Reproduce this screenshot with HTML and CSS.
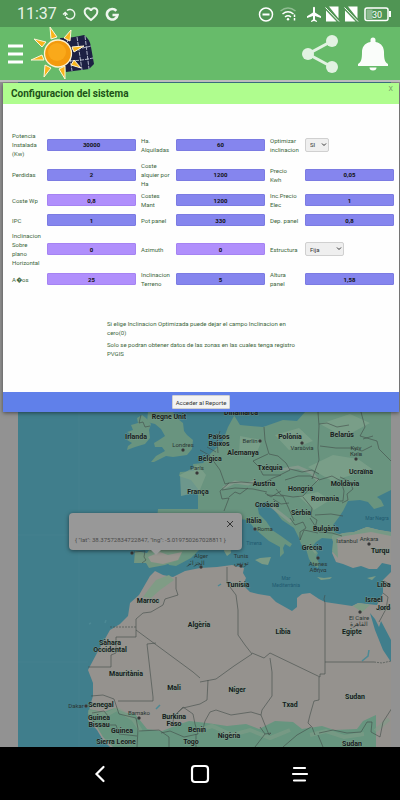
FILE: index.html
```html
<!DOCTYPE html>
<html lang="es">
<head>
    <meta charset="UTF-8">
    <meta name="viewport" content="width=device-width, initial-scale=1.0">
    <title>Configuracion del sistema</title>
    <link rel="stylesheet" href="styles.css">
</head>
<body>
    <div class="status-bar">
        <span class="clock">11:37</span>
        <svg width="58" height="16" viewBox="60 5 58 16" fill="none" stroke="#eef6ee" stroke-width="1.4">
            <path d="M66 9.500a4.800 4.800 0 1 1-1 6.500M62 13.500l2.200-2 2.300 2.300M64.300 12v3"/>
            <path d="M90 19c-4.500-3.500-6.300-5.500-6.300-8a3.200 3.200 0 0 1 6.300-1.200A3.200 3.200 0 0 1 96.300 11c0 2.500-1.800 4.500-6.300 8z" stroke-width="2"/>
            <path d="M115.300 9.800a5.300 5.300 0 1 0 1.200 4.200h-5" stroke-width="2.600"/>
        </svg>
        <svg class="status-right" width="134" height="18" viewBox="258 4 134 18" fill="none" stroke="#fff" stroke-width="1.500">
            <circle cx="266" cy="13.500" r="6.500"/>
            <path d="M262.500 13.500h7" stroke-width="2"/>
            <path d="M280.500 10q7.500-6 15 0" stroke="#8fbd91"/>
            <path d="M282.500 13q5.500-4.500 11 0M285 16q3-2.500 6 0"/>
            <circle cx="288" cy="18.300" r="1.200" fill="#fff" stroke="none"/>
            <path d="M294.500 13.500v6" stroke-dasharray="2.500 1"/>
            <path d="M313 6.500q1-1.500 2 0v5l6 3.800v1.600l-6-1.900v3.500l2 1.400v1l-3-.8-3 .8v-1l2-1.400V15l-6 1.900v-1.600l6-3.800z" fill="#fff" stroke="none"/>
            <path d="M329 5.500h9.500v12zM326 9.500l10.500 11H326zM348 5.500h9.500v12zM345 9.500l10.500 11H345z" fill="#fff" stroke="none"/>
            <path d="M325.500 6.500l13.500 14M344.500 6.500l13.500 14" stroke-width="1"/>
            <rect x="365" y="7" width="23" height="12.500" rx="2"/>
            <path d="M366.500 8.500h6v9.500h-6z" fill="#8dba90" stroke="none"/>
            <path d="M390 10v6" stroke-width="2"/>
            <text x="377" y="16.500" class="battery-text">30</text>
        </svg>
    </div>

    <header class="app-bar">
        <button class="icon-btn" aria-label="Menu">
            <svg width="15" height="20" viewBox="0 0 15 20" stroke="#fff" stroke-width="3"><path d="M0 2h15M0 10h15M0 18h15"/></svg>
        </button>
        <svg class="logo" width="66" height="53" viewBox="30 27 66 53">
            <path d="M60 38q13 0 24-3 6 4 7 12l3 17-5 5-23 3z" fill="#1d2043"/>
            <path d="M67 38l5 33M77 37l5 33M85 36l4 33M62 49q15 1 29-3M65 61q15 0 28-3" stroke="#d6dbe8" stroke-width=".8" stroke-dasharray="4 1" fill="none"/>
            <g fill="#f9b51c" stroke="#fff6d8" stroke-width="1">
                <path d="M50 27l7 10-6 2zM71 30l-1 11-6-3zM34 39l12 3-4 5zM31 60l11-5 2 5zM44 77l1-12 6 3zM65 79l-6-10 6-3zM81 68l-10-3 3-5zM84 46l-10 6-2-5z"/>
            </g>
            <circle cx="58" cy="53.500" r="13.500" fill="#f39a0e" stroke="#fff4d0" stroke-width="1.300"/>
            <circle cx="57" cy="52" r="9" fill="#faa91a"/>
        </svg>
        <button class="icon-btn share" aria-label="Compartir">
            <svg width="38" height="40" viewBox="0 0 38 40" fill="#e2f2e2">
                <path d="M31 7L7 20l24 13" fill="none" stroke="#e2f2e2" stroke-width="3"/>
                <circle cx="31" cy="7" r="6"/><circle cx="7" cy="20" r="6"/><circle cx="31" cy="33" r="6"/>
            </svg>
        </button>
        <button class="icon-btn" aria-label="Notificaciones">
            <svg width="30" height="34" viewBox="0 0 30 34" fill="#fafdfa">
                <path d="M12.500 3a2.500 2.500 0 0 1 5 0v2C24 6 26 11 26 15c0 8 1 10 4 12v2H0v-2c3-2 4-4 4-12C4 11 6 6 12.500 5zM11.500 30.500h7a3.500 3 0 0 1-7 0z"/>
            </svg>
        </button>
    </header>

    <main class="content">
        <svg class="map" viewBox="18 82 373 665" preserveAspectRatio="xMidYMin slice">
            <rect x="18" y="82" width="373" height="665" fill="#407e8c"/>
            <path d="M79 412v335M18 535h51M18 662h70" stroke="#488592" stroke-width=".5"/>
            <!-- Europa -->
            <g fill="#69947f">
                <path d="M127 432l6-2-2-5 7-2-1-5 5-3 4 3 5 6-2 6 1 8-5 6-10 3-8 3 1-4 4-3-5-3 6-4z"/>
                <path d="M148 412h25l5 7 5 4 1 8 3 4 6 5-1 9-5 6-14 2-7-1-6 3-6 3-3 0 5-6 9-5-3-4-7 0-1-4 5-3 6-4-4-7-6-5-8-2z"/>
                <path d="M232 412l8 13 23 2 20-7 14 1 8-9h86v78l-14 7 4 3 3 6-10 3-6-7-8-2-12 1-5 10-4 6-6 8 1 7 8 3-9 4-11-1-6 4-4 5 6 6-2 4 3 6-1 5-5-3-4-6-3-10-5-5-2-6-5-10-12-8-10-13-5-5-10 2 2 10 7 7 6 9 9 6 11 8-2 3-5-3-2 4 1 5-4 4 0-10-11-6-7-6-8-7-6-8-9-1-6 2-12 2-14 10-8 17-8 8-15 8-7-1-3-5-13 0v-13l3-18 2-20 40 0v-20l-7-9-12-4 1-4 14-1-1-7 10-1 8-10 11-10 6-16 6-11z"/>
            </g>
            <g fill="#80a28b" opacity=".7">
                <path d="M180 475l18-10 8 10-7 17-18 4zM240 436l22 4-5 12-18 2zM275 435l24-7 14 13-24 9zM320 424l30-10 20 9-26 14zM308 467l25-12 25 4 14 10-40 12zM298 496l20-4 12 8-16 10z"/>
            </g>
            <path d="M223 488l12-6 13 2 8-3M271 506l10 8 10 8M280 470l18-3 14 6 6 8" fill="none" stroke="#8d9b90" stroke-width="3" opacity=".7"/>
            <path d="M135 551l12 2 2-3h34l-4 10-14 5-16 3-3-5-12 0z" fill="#73957f"/>
            <path d="M148 557l12-5 8 3 14-3-4 8-15 4-12-2z" fill="#98958f"/>
            <path d="M332 536l12-3 10-1 13-5 12 3 12 2v33l-9-2-5 6-8 0-8-3-8 2-10-4-7-2-4-9 2-6z" fill="#96948f"/>
            <path d="M332 536l12-3 10-1 13-5 12 3 12 2v4l-20-4-26 4-8 2 1 20-6-7 1-9z" fill="#779985"/>
            <path d="M255 560l5-2 11-1-3 8-6-1zM226 541l4 2 1 10-4 3-3-5zM317 577l7 1 8-1-2 2-9 1zM367 578l9-2-4 4zM309 546l8 6-2 2z" fill="#7b9b85"/>
            <!-- Africa -->
            <path d="M150 576l5-5 8 4 10 2 12-6 15-3 17-1 15-2 12 3-1 5 3 5-3 7 7 7 8 2 12 2 6 6 16 9 5-4v-9l5-4 8-1 9 6 6 3 27 4 6-3 19 2 6-12 0-13 8-8v178H113l-10-10-6-10-9-10 2-14 3-10v-13l-5-13 9-17 13-23 10-6 8-8 2-13 9-8z" fill="#95928e"/>
            <path d="M148 590l8-10 13-5 5 5-14 10-9 8-8-1zM353 606l6-3 11 2-8 7z" fill="#7f9c85"/>
            <path d="M113 747l-10-10-6-10-9-10 1-8 14 3 12-4 11 5 9 1 12 15 15 2 18-7 9-3 18 2 20 3 19-2 13 5 16-8 18 1 9 7 20-3 12 4 23-1 6-8 13-6v32z" fill="#67957f"/>
            <path d="M88 712l20 2 9-5 16 10 8 12M200 730l12-4 20 9 18-5 20 8 20-8M310 735l16-4 18 6 20-3M375 731l14-12" fill="none" stroke="#819d87" stroke-width="4" opacity=".6"/>
            <path d="M370 613l5 6 4 8 2-6 10 19v22l-8-12-8-20z" fill="#407e8c"/>
            <path d="M362 661l6-5 1-6M156 709l4-4M218 586l3-2M89 624l2-1M105 623l1-3" stroke="#4c8995" stroke-width="1.500" fill="none"/>
            <!-- fronteras -->
            <g fill="none" stroke="#414b48" stroke-width=".6">
                <path d="M141 415l-2 8 4-1 2 5 5-1"/>
                <path d="M264 427l1 13 4 14 9 2 8 7 4 7-10 5-17 0-4-8-6-6 15-7M318 412l1 14-1 22 1 12-7 19M320 446l16 2 16 0 10 3 10-5M349 425l-12 2-10-4-8 1M361 412l4 15-5 9 17 5 2 8 12 12M363 439l10-3"/>
                <path d="M200 450l9 5 11 15 5 14 4-1 12-1 12 1 10 0 10-5 8-3M218 453l-1-13 3-9M207 447l9 5M229 483l-9 8 2 8 7-1-5 13M229 497l6-5 5 2 8-6M222 490l13-2 18 1 14 3M265 493l6 4 10-6M276 489l5 6 12 2 10-1 9-10 7-7-9-3-12 0-13 4M267 495l16 1 6 13 5 12M273 499l8 5 8-1M290 469l12 3 10-2 7 4M303 497l9 11-1 8 6 4-2 8M315 515l16-1 12 2M319 480l13-4 9 5 3 10-1 10-5 0M340 477l9 4 4 8-6 5 1 6-6 3M290 518l5 7 8-3 3 6-6 4 0 8M310 518l9 14 13 1 10 3M300 540l4-10 14 3M134 552l11-1-1 6 2 3-4 3"/>
                <path d="M176 577l0 12 2 6-13 4-2 6-12 7-8 1-7 6v18h-20v16l-5 2v12H88M136 630l57 42 7 6M156 643l-9 1 6 53 0 4h-35"/>
                <path d="M110 627h26" stroke-dasharray="2 1"/>
                <path d="M227 567l0 16 9 12 2 15 0 25 7 10 7 9-18 12-18 13-16 3M252 653l12 5 6-5 50 24v-3h5v-71l-1-4 1-4M325 662h49M270 658l2 14 0 24-10 14-1 5-10-3-20 3-15-5-6 2-5 9-3 12M319 677v23l-5 1-4 14-2 8 4 4 3 8M261 715l8 20 2-2-6 1-5-7M265 734l-10 13M208 680l-1 20-7 4-17 4-9 8-1 6M174 716l9-9 10 7 2 10 3 10-14 3-14-6-9 2M91 696l12-1 11 4 5 15 17 4 2 11-1 18M92 713l12-2 4 5M98 725h18l3 9 18 2M139 731l20-1 10 7v10M196 734l0 13M319 733l14-3 14 3 14-1 6-10 5 0-1 10 9 5 3-15 9-14M318 735l5 12M311 727l-14 8-14 12M383 593l5 4-2 12-7 13M379 610l12-2M384 581l7 4"/>
                <path d="M374 662l8 1 9-2" stroke-dasharray="2 1"/>
            </g>
            <g class="country">
                <text x="169" y="419">Regne Unit</text>
                <text x="241" y="415">Dinamarca</text>
                <text x="136" y="439">Irlanda</text>
                <text x="219" y="439">Països</text>
                <text x="219" y="446">Baixos</text>
                <text x="210" y="461">Bèlgica</text>
                <text x="243" y="455">Alemanya</text>
                <text x="290" y="439">Polònia</text>
                <text x="342" y="437">Belarús</text>
                <text x="270" y="470">Txèquia</text>
                <text x="264" y="486">Àustria</text>
                <text x="288" y="491" class="start">Hongria</text>
                <text x="361" y="474">Ucraïna</text>
                <text x="345" y="486">Moldàvia</text>
                <text x="198" y="494">França</text>
                <text x="325" y="501">Romania</text>
                <text x="267" y="507">Croàcia</text>
                <text x="301" y="515">Sèrbia</text>
                <text x="254" y="523">Itàlia</text>
                <text x="326" y="531">Bulgària</text>
                <text x="312" y="550">Grècia</text>
                <text x="371" y="553" class="start">Turqu</text>
                <text x="148" y="603">Marroc</text>
                <text x="199" y="627">Algèria</text>
                <text x="238" y="587">Tunísia</text>
                <text x="283" y="634">Líbia</text>
                <text x="352" y="634">Egipte</text>
                <text x="374" y="602">Israel</text>
                <text x="377" y="587" class="start">Líba</text>
                <text x="376" y="610" class="start">Jord</text>
                <text x="110" y="645">Sàhara</text>
                <text x="110" y="652">Occidental</text>
                <text x="126" y="676">Mauritània</text>
                <text x="174" y="690">Mali</text>
                <text x="237" y="692">Níger</text>
                <text x="290" y="707">Txad</text>
                <text x="355" y="699">Sudan</text>
                <text x="352" y="746">Sudan</text>
                <text x="101" y="707">Senegal</text>
                <text x="99" y="720">Guinea</text>
                <text x="99" y="727">Bissau</text>
                <text x="122" y="733">Guinea</text>
                <text x="116" y="744">Sierra Leone</text>
                <text x="174" y="719">Burkina</text>
                <text x="174" y="726">Faso</text>
                <text x="197" y="732">Benín</text>
                <text x="191" y="744">Togo</text>
                <text x="229" y="738">Nigèria</text>
            </g>
            <g class="city">
                <text x="183" y="447">Londres</text>
                <text x="197" y="470">París</text>
                <text x="250" y="443">Berlín</text>
                <text x="302" y="450">Varsòvia</text>
                <text x="356" y="450">Kyiv</text>
                <text x="356" y="456">Київ</text>
                <text x="265" y="531">Roma</text>
                <text x="347" y="543">Istanbul</text>
                <text x="369" y="541">Ankara</text>
                <text x="318" y="566">Atenes</text>
                <text x="318" y="572">Αθήνα</text>
                <text x="201" y="558">Alger</text>
                <text x="196" y="565">الجزائر</text>
                <text x="241" y="558">Tunis</text>
                <text x="241" y="565">تونس</text>
                <text x="359" y="620">El Caire</text>
                <text x="359" y="626">القاهرة</text>
                <text x="76" y="708">Dakar</text>
                <text x="139" y="715">Bamako</text>
            </g>
            <g class="sea">
                <text x="377" y="520">Mar Negra</text>
                <text x="254" y="545">Tirrena</text>
                <text x="286" y="580">Mar</text>
                <text x="286" y="587">Mediterrània</text>
            </g>
            <g fill="#333" stroke="#555" stroke-width=".5">
                <circle cx="183" cy="450" r="1.500"/><circle cx="197" cy="473" r="1.500"/><circle cx="260" cy="441" r="1.500"/>
                <circle cx="302" cy="443" r="1.500"/><circle cx="356" cy="459" r="1.500"/><circle cx="255" cy="529" r="1.500"/>
                <circle cx="369" cy="544" r="1.500"/><circle cx="318" cy="558" r="1.500"/><circle cx="241" cy="566" r="1.500"/>
                <circle cx="201" cy="567" r="1.500"/><circle cx="360" cy="612" r="1.500"/><circle cx="86" cy="706" r="1.500"/>
                <circle cx="139" cy="718" r="1.500"/><circle cx="132" cy="553" r="1.500"/>
            </g>
        </svg>

        <div class="popup">
            <button class="popup-close" aria-label="Cerrar">
                <svg width="8" height="8" viewBox="0 0 8 8" stroke="#333" stroke-width="1"><path d="M1 1l6 6M7 1L1 7"/></svg>
            </button>
            <p>{ "lat": 38.37572834722847, "lng": -5.019750267028811 }</p>
        </div>

        <div class="modal" role="dialog" aria-labelledby="modal-title">
            <div class="modal-header">
                <h2 id="modal-title">Configuracion del sistema</h2>
                <button class="modal-close">X</button>
            </div>
            <form class="modal-body">
                <div class="form-grid">
                    <label for="potencia">Potencia Instalada (Kw)</label>
                    <input type="text" id="potencia" value="30000">
                    <label for="ha">Ha. Alquiladas</label>
                    <input type="text" id="ha" value="60">
                    <label for="optimizar">Optimizar inclinacion</label>
                    <select id="optimizar"><option>SI</option><option>NO</option></select>

                    <label for="perdidas">Perdidas</label>
                    <input type="text" id="perdidas" value="2">
                    <label for="alquiler">Coste<br>alquier por<br>Ha</label>
                    <input type="text" id="alquiler" value="1200">
                    <label for="precio">Precio<br>Kwh</label>
                    <input type="text" id="precio" value="0,05">

                    <label for="coste-wp">Coste Wp</label>
                    <input type="text" id="coste-wp" class="alt" value="0,8">
                    <label for="mant">Costes<br>Mant</label>
                    <input type="text" id="mant" value="1200">
                    <label for="inc-precio">Inc.Precio<br>Elec</label>
                    <input type="text" id="inc-precio" value="1">

                    <label for="ipc">IPC</label>
                    <input type="text" id="ipc" value="1">
                    <label for="pot-panel">Pot panel</label>
                    <input type="text" id="pot-panel" value="330">
                    <label for="dep-panel">Dep. panel</label>
                    <input type="text" id="dep-panel" value="0,8">

                    <label for="inclinacion">Inclinacion<br>Sobre<br>plano<br>Horizontal</label>
                    <input type="text" id="inclinacion" class="alt" value="0">
                    <label for="azimuth">Azimuth</label>
                    <input type="text" id="azimuth" class="alt" value="0">
                    <label for="estructura">Estructura</label>
                    <select id="estructura" class="wide"><option>Fija</option><option>Seguidor</option></select>

                    <label for="anos">A&#xFFFD;os</label>
                    <input type="text" id="anos" class="alt" value="25">
                    <label for="terreno">Inclinacion Terreno</label>
                    <input type="text" id="terreno" value="5">
                    <label for="altura">Altura<br>panel</label>
                    <input type="text" id="altura" value="1,58">
                </div>
                <div class="notes">
                    <p>Si elige Inclinacion Optimizada puede dejar el campo Inclinacion en cero(0)</p>
                    <p>Solo se podran obtener datos de las zonas en las cuales tenga registro PVGIS</p>
                </div>
            </form>
            <div class="modal-footer">
                <button class="btn-report">Acceder al Reporte</button>
            </div>
        </div>
    </main>

    <nav class="nav-bar">
        <button class="icon-btn" aria-label="Atras">
            <svg width="20" height="20" viewBox="0 0 20 20" fill="none" stroke="#fff" stroke-width="2.200" stroke-linecap="round"><path d="M13.500 3L6.500 10l7 7"/></svg>
        </button>
        <button class="icon-btn" aria-label="Inicio">
            <svg width="20" height="20" viewBox="0 0 20 20" fill="none" stroke="#fff" stroke-width="2.200"><rect x="2" y="2" width="16" height="16" rx="3"/></svg>
        </button>
        <button class="icon-btn" aria-label="Recientes">
            <svg width="20" height="20" viewBox="0 0 20 20" stroke="#fff" stroke-width="2.200" stroke-linecap="round"><path d="M4 4h11M3 10h14M4 16.500h11"/></svg>
        </button>
    </nav>
</body>
</html>
```

FILE: styles.css
```css
* {
    box-sizing: border-box;
}
body {
    margin: 0;
    min-height: 100vh;
    display: flex;
    flex-direction: column;
    font-family: Roboto, "Noto Sans", sans-serif;
    background-color: #000;
}
button {
    font-family: inherit;
    cursor: pointer;
}
.status-bar {
    display: flex;
    align-items: center;
    gap: 4px;
    height: 27px;
    padding: 0 8px 0 17px;
    background-color: #509554;
}
.clock {
    width: 40px;
    font-size: 16px;
    color: #e8f3e8;
}
.status-right {
    margin-left: auto;
}
.battery-text {
    font-size: 9px;
    fill: #fff;
    stroke: none;
    text-anchor: middle;
}
.app-bar {
    display: flex;
    align-items: center;
    height: 53px;
    padding: 0 12px 0 8px;
    background-color: #67bb6a;
}
.icon-btn {
    display: flex;
    padding: 0;
    border: none;
    background: none;
}
.logo {
    margin-left: 7px;
}
.share {
    margin-left: auto;
    margin-right: 19px;
}
.content {
    position: relative;
    flex: 1;
    display: flex;
    padding: 0 9px 0 18px;
    border-top: 2px solid #bdbdbd;
    background-color: #929292;
    overflow: hidden;
}
.map {
    flex: 1;
    width: 100%;
    min-width: 0;
}
.country {
    font-size: 7px;
    font-weight: 700;
    fill: #171c1b;
    stroke: #86a294;
    stroke-width: 1px;
    stroke-opacity: 0.6;
    paint-order: stroke;
    text-anchor: middle;
}
.country .start {
    text-anchor: start;
}
.city {
    font-size: 6px;
    fill: #2c3634;
    text-anchor: middle;
}
.sea {
    font-size: 5px;
    fill: #205a70;
    text-anchor: middle;
}

/* info window of the selected point */
.popup {
    position: absolute;
    top: 431px;
    left: 69px;
    width: 173px;
    height: 37px;
    padding: 5px 6px;
    border-radius: 4px;
    background-color: #989898;
    box-shadow: 0 1px 4px rgba(0,0,0,0.5);
}
.popup::after {
    content: "";
    position: absolute;
    top: 100%;
    left: 50%;
    margin-left: -5px;
    border: 5px solid transparent;
    border-top-color: #989898;
}
.popup-close {
    display: flex;
    margin-left: auto;
    padding: 2px;
    border: none;
    background: none;
}
.popup p {
    margin: 5px 0 0;
    font-size: 6px;
    line-height: 9px;
    color: #4a4a4a;
    white-space: nowrap;
}

.modal {
    position: absolute;
    top: 1px;
    left: 3px;
    right: 1px;
    background-color: #fefefe;
    box-shadow: 0 1px 4px rgba(0,0,0,0.5);
}
.modal-header {
    display: flex;
    justify-content: space-between;
    align-items: flex-start;
    padding: 0 6px 0 8px;
    background-color: #affd8e;
}
.modal-header h2 {
    margin: 0;
    font-size: 10px;
    font-weight: 700;
    line-height: 21px;
    color: #1c5217;
}
.modal-close {
    padding: 2px 0;
    border: none;
    background: none;
    font-size: 7px;
    line-height: 8px;
    color: #769a68;
}
.modal-body {
    padding: 27px 5px 31px 9px;
    font-size: 6px;
    line-height: 9px;
    color: #3c663c;
}
.form-grid {
    display: grid;
    grid-template-columns: 30px 1fr 30px 1fr 30px 1fr;
    grid-auto-rows: minmax(16px, auto);
    align-items: center;
    gap: 3px 5px;
}
.form-grid input {
    width: 100%;
    height: 12px;
    padding: 0;
    border: 1px solid #7b7be2;
    border-radius: 1px;
    background-color: #8585ee;
    font-family: inherit;
    font-size: 6px;
    font-weight: 700;
    text-align: center;
    color: #111;
}
.form-grid input.alt {
    border-color: #a583f2;
    background-color: #b08ffc;
}
.form-grid select {
    width: 24px;
    height: 14px;
    padding: 0 4px;
    border: 1px solid #d0d0d0;
    border-radius: 2px;
    appearance: none;
    background: #efefef url("data:image/svg+xml,%3Csvg xmlns='http://www.w3.org/2000/svg' width='6' height='4' fill='none' stroke='%23333'%3E%3Cpath d='M1 .5l2 2 2-2'/%3E%3C/svg%3E") no-repeat right 1px center;
    font-family: inherit;
    font-size: 6px;
    color: #333;
}
.form-grid select.wide {
    width: 39px;
}
.notes {
    width: 195px;
    margin: 31px auto 0 95px;
}
.notes p {
    margin: 0 0 3px;
}
.modal-footer {
    display: flex;
    justify-content: center;
    padding: 3px;
    background-color: #6080ea;
}
.btn-report {
    height: 14px;
    padding: 0 3px;
    border: 1px solid #d0d0d0;
    border-radius: 1px;
    background-color: #f3f3f3;
    font-size: 6px;
    color: #333;
}

.nav-bar {
    display: flex;
    justify-content: center;
    align-items: center;
    gap: 80px;
    height: 53px;
    background-color: #000;
}
```
